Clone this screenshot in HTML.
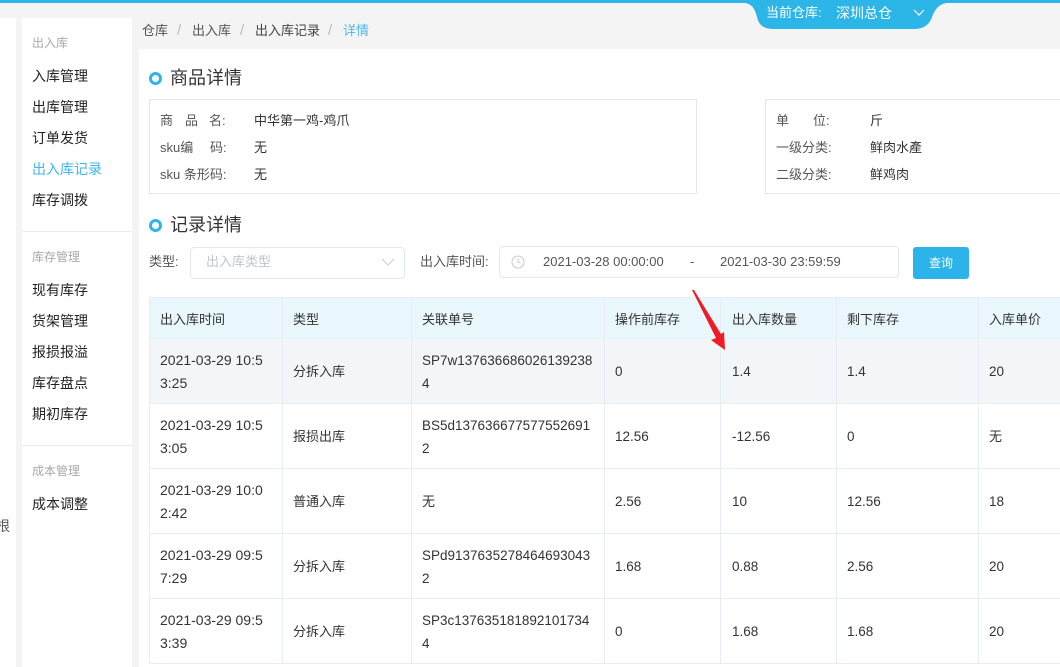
<!DOCTYPE html>
<html lang="zh"><head><meta charset="utf-8"><title>详情</title>
<style>
html,body{margin:0;padding:0}
body{width:1060px;height:667px;overflow:hidden;position:relative;background:#f4f4f5;font-family:"Liberation Sans","Noto Sans CJK SC",sans-serif;font-size:13px;color:#333}
.a{position:absolute;white-space:nowrap;line-height:20px}
.b{position:absolute}
.m{font-size:14px;color:#222;left:32px}
.h{font-size:12px;color:#a8a8a8;left:32px}
.l{font-size:13px;color:#555}
.v{font-size:13px;color:#333}
.t{font-size:18px;color:#333;line-height:26px}
.dot{position:absolute;width:7px;height:7px;border:3px solid #2cb6e8;border-radius:50%;background:#fff}
.hl{position:absolute;background:#e8ecf3;height:1px;left:149px;width:911px}
.vl{position:absolute;background:#e8ecf3;width:1px;top:297px;height:367px}
.c{position:absolute;white-space:nowrap;font-size:13px;color:#333;line-height:20px}
.n{font-size:14px;line-height:23px}
.s{font-size:13.5px;line-height:23px}
.sep{color:#bbb;font-size:15px}
</style></head><body>
<div class="b" style="left:0;top:0;width:1060px;height:3px;background:#2cb6e8"></div>
<svg class="b" style="left:740px;top:0" width="210" height="32" viewBox="0 0 210 32"><path d="M5 3C12 4 15 9 17 17C19 25 23 29 34 29L173 29C184 29 189 25 192 17C195 9 199 4 207 3Z" fill="#2cb6e8"/><path d="M174 10L179 15L184 10" fill="none" stroke="#fff" stroke-width="1.2"/></svg>
<div class="a" style="left:766px;top:3px;font-size:13px;color:#fff">当前仓库:</div>
<div class="a" style="left:836px;top:3px;font-size:14px;color:#fff">深圳总仓</div>

<div class="b" style="left:0;top:18px;width:16px;height:649px;background:#fff"></div>
<div class="a" style="left:-4px;top:516px;font-size:14px;color:#555">根</div>
<div class="b" style="left:22px;top:18px;width:110px;height:649px;background:#fff"></div>
<div class="b" style="left:22px;top:231px;width:110px;height:1px;background:#eaeaea"></div>
<div class="b" style="left:22px;top:445px;width:110px;height:1px;background:#eaeaea"></div>
<div class="a h" style="top:33px">出入库</div>
<div class="a m" style="top:66px">入库管理</div>
<div class="a m" style="top:97px">出库管理</div>
<div class="a m" style="top:128px">订单发货</div>
<div class="a m" style="top:159px;color:#3db8ea">出入库记录</div>
<div class="a m" style="top:190px">库存调拨</div>
<div class="a h" style="top:247px">库存管理</div>
<div class="a m" style="top:280px">现有库存</div>
<div class="a m" style="top:311px">货架管理</div>
<div class="a m" style="top:342px">报损报溢</div>
<div class="a m" style="top:373px">库存盘点</div>
<div class="a m" style="top:404px">期初库存</div>
<div class="a h" style="top:461px">成本管理</div>
<div class="a m" style="top:494px">成本调整</div>

<div class="a" style="left:142px;top:21px;color:#555">仓库</div>
<div class="a sep" style="left:177px;top:21px">/</div>
<div class="a" style="left:192px;top:21px;color:#555">出入库</div>
<div class="a sep" style="left:240px;top:21px">/</div>
<div class="a" style="left:255px;top:21px;color:#444">出入库记录</div>
<div class="a sep" style="left:328px;top:21px">/</div>
<div class="a" style="left:343px;top:21px;color:#4ab9e6">详情</div>

<div class="b" style="left:139px;top:49px;width:921px;height:618px;background:#fff"></div>
<div class="dot" style="left:149px;top:72px"></div>
<div class="a t" style="left:170px;top:65px">商品详情</div>
<div class="b" style="left:149px;top:99px;width:546px;height:93px;border:1px solid #e6e6e6"></div>
<div class="b" style="left:765px;top:99px;width:300px;height:93px;border:1px solid #e6e6e6"></div>
<div class="a l" style="left:160px;top:111px">商</div><div class="a l" style="left:185px;top:111px">品</div><div class="a l" style="left:209px;top:111px">名:</div>
<div class="a l" style="left:160px;top:138px">sku编</div><div class="a l" style="left:210px;top:138px">码:</div>
<div class="a l" style="left:160px;top:165px">sku 条形码:</div>
<div class="a v" style="left:254px;top:111px">中华第一鸡-鸡爪</div>
<div class="a v" style="left:254px;top:138px">无</div>
<div class="a v" style="left:254px;top:165px">无</div>
<div class="a l" style="left:776px;top:111px">单</div><div class="a l" style="left:813px;top:111px">位:</div>
<div class="a l" style="left:776px;top:138px">一级分类:</div>
<div class="a l" style="left:776px;top:165px">二级分类:</div>
<div class="a v" style="left:870px;top:111px">斤</div>
<div class="a v" style="left:870px;top:138px">鲜肉水產</div>
<div class="a v" style="left:870px;top:165px">鲜鸡肉</div>

<div class="dot" style="left:149px;top:219px"></div>
<div class="a t" style="left:170px;top:212px">记录详情</div>
<div class="a l" style="left:149px;top:252px">类型:</div>
<div class="b" style="left:190px;top:247px;width:213px;height:30px;border:1px solid #e4e7ed;border-radius:4px"></div>
<div class="a" style="left:206px;top:252px;color:#c0c4cc">出入库类型</div>
<svg class="b" style="left:380px;top:256px" width="16" height="12"><path d="M2 3L8 9L14 3" fill="none" stroke="#c8ccd4" stroke-width="1"/></svg>
<div class="a l" style="left:420px;top:252px">出入库时间:</div>
<div class="b" style="left:499px;top:246px;width:398px;height:30px;border:1px solid #e4e7ed;border-radius:4px"></div>
<svg class="b" style="left:511px;top:255px" width="14" height="14"><circle cx="7" cy="7" r="6" fill="none" stroke="#c8ccd4" stroke-width="1.1"/><path d="M7 3.5V7.5H9.5" fill="none" stroke="#c8ccd4"/></svg>
<div class="a" style="left:543px;top:252px;color:#555">2021-03-28 00:00:00</div>
<div class="a" style="left:690px;top:252px;color:#555">-</div>
<div class="a" style="left:720px;top:252px;color:#555">2021-03-30 23:59:59</div>
<div class="b" style="left:913px;top:247px;width:56px;height:32px;background:#2cb3ea;border-radius:3px"></div>
<div class="a" style="left:929px;top:253px;color:#fff;font-size:12px">查询</div>

<div class="b" style="left:149px;top:297px;width:911px;height:42px;background:#e9f7fd"></div>
<div class="b" style="left:149px;top:339px;width:911px;height:64px;background:#f2f6f9"></div>
<div class="hl" style="top:297px"></div>
<div class="hl" style="top:403px"></div><div class="hl" style="top:468px"></div><div class="hl" style="top:533px"></div><div class="hl" style="top:598px"></div><div class="hl" style="top:663px"></div>
<div class="vl" style="left:149px"></div><div class="vl" style="left:282px"></div><div class="vl" style="left:411px"></div><div class="vl" style="left:604px"></div><div class="vl" style="left:720px"></div><div class="vl" style="left:836px"></div><div class="vl" style="left:978px"></div>

<div class="c" style="left:160px;top:310px">出入库时间</div>
<div class="c" style="left:293px;top:310px">类型</div>
<div class="c" style="left:422px;top:310px">关联单号</div>
<div class="c" style="left:615px;top:310px">操作前库存</div>
<div class="c" style="left:732px;top:310px">出入库数量</div>
<div class="c" style="left:847px;top:310px">剩下库存</div>
<div class="c" style="left:989px;top:310px">入库单价</div>

<div class="c n" style="left:160px;top:349px">2021-03-29 10:5<br>3:25</div>
<div class="c" style="left:293px;top:362px">分拆入库</div>
<div class="c s" style="left:422px;top:349px">SP7w137636686026139238<br>4</div>
<div class="c s" style="left:615px;top:360px">0</div><div class="c s" style="left:732px;top:360px">1.4</div><div class="c s" style="left:847px;top:360px">1.4</div><div class="c s" style="left:989px;top:360px">20</div>

<div class="c n" style="left:160px;top:414px">2021-03-29 10:5<br>3:05</div>
<div class="c" style="left:293px;top:427px">报损出库</div>
<div class="c s" style="left:422px;top:414px">BS5d137636677577552691<br>2</div>
<div class="c s" style="left:615px;top:425px">12.56</div><div class="c s" style="left:732px;top:425px">-12.56</div><div class="c s" style="left:847px;top:425px">0</div><div class="c" style="left:989px;top:427px">无</div>

<div class="c n" style="left:160px;top:479px">2021-03-29 10:0<br>2:42</div>
<div class="c" style="left:293px;top:492px">普通入库</div>
<div class="c" style="left:422px;top:492px">无</div>
<div class="c s" style="left:615px;top:490px">2.56</div><div class="c s" style="left:732px;top:490px">10</div><div class="c s" style="left:847px;top:490px">12.56</div><div class="c s" style="left:989px;top:490px">18</div>

<div class="c n" style="left:160px;top:544px">2021-03-29 09:5<br>7:29</div>
<div class="c" style="left:293px;top:557px">分拆入库</div>
<div class="c s" style="left:422px;top:544px">SPd9137635278464693043<br>2</div>
<div class="c s" style="left:615px;top:555px">1.68</div><div class="c s" style="left:732px;top:555px">0.88</div><div class="c s" style="left:847px;top:555px">2.56</div><div class="c s" style="left:989px;top:555px">20</div>

<div class="c n" style="left:160px;top:609px">2021-03-29 09:5<br>3:39</div>
<div class="c" style="left:293px;top:622px">分拆入库</div>
<div class="c s" style="left:422px;top:609px">SP3c137635181892101734<br>4</div>
<div class="c s" style="left:615px;top:620px">0</div><div class="c s" style="left:732px;top:620px">1.68</div><div class="c s" style="left:847px;top:620px">1.68</div><div class="c s" style="left:989px;top:620px">20</div>

<svg class="b" style="left:680px;top:280px" width="60" height="80"><path d="M12 10L14 10L41 54L44 52L45 70L31 60L36 58Z" fill="#ee1c25"/></svg>
</body></html>
